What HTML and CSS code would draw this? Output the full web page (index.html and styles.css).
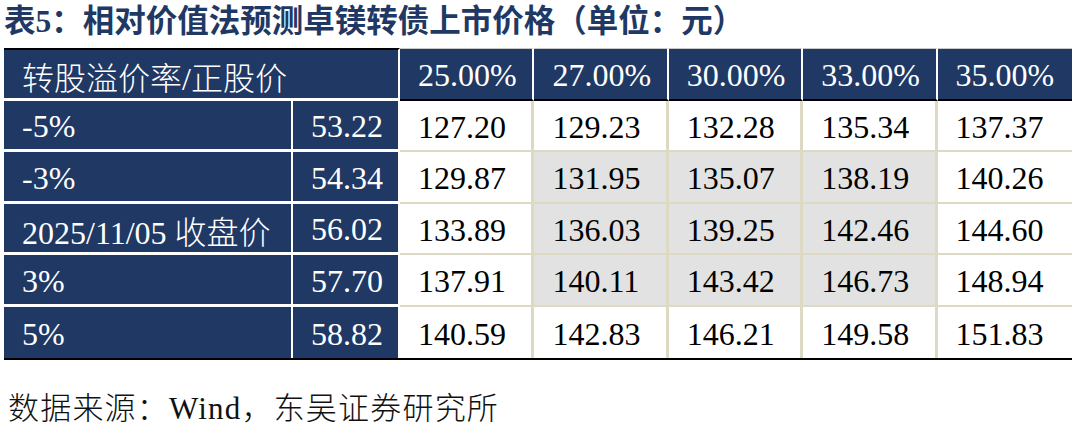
FILE: index.html
```html
<!DOCTYPE html>
<html lang="zh-CN">
<head>
<meta charset="utf-8">
<title>相对价值法预测卓镁转债上市价格</title>
<link rel="stylesheet" href="styles.css">
</head>
<body>
<div class="page">
  <h1 class="title">表<span class="lat">5</span>：相对价值法预测卓镁转债上市价格（单位：元）</h1>
  <div class="table">
    <div class="cell hd-label">转股溢价率/正股价</div>
    <div class="cell hd">25.00%</div>
    <div class="cell hd">27.00%</div>
    <div class="cell hd">30.00%</div>
    <div class="cell hd">33.00%</div>
    <div class="cell hd rc">35.00%</div>

    <div class="cell lbl">-5%</div>
    <div class="cell val">53.22</div>
    <div class="cell num">127.20</div>
    <div class="cell num">129.23</div>
    <div class="cell num">132.28</div>
    <div class="cell num">135.34</div>
    <div class="cell num rc">137.37</div>

    <div class="cell lbl">-3%</div>
    <div class="cell val">54.34</div>
    <div class="cell num">129.87</div>
    <div class="cell num g">131.95</div>
    <div class="cell num g">135.07</div>
    <div class="cell num g">138.19</div>
    <div class="cell num rc">140.26</div>

    <div class="cell lbl">2025/11/05 收盘价</div>
    <div class="cell val">56.02</div>
    <div class="cell num">133.89</div>
    <div class="cell num g">136.03</div>
    <div class="cell num g">139.25</div>
    <div class="cell num g">142.46</div>
    <div class="cell num rc">144.60</div>

    <div class="cell lbl">3%</div>
    <div class="cell val">57.70</div>
    <div class="cell num">137.91</div>
    <div class="cell num g">140.11</div>
    <div class="cell num g">143.42</div>
    <div class="cell num g">146.73</div>
    <div class="cell num rc">148.94</div>

    <div class="cell lbl end">5%</div>
    <div class="cell val end">58.82</div>
    <div class="cell num end">140.59</div>
    <div class="cell num end">142.83</div>
    <div class="cell num end">146.21</div>
    <div class="cell num end">149.58</div>
    <div class="cell num end rc">151.83</div>
  </div>
  <p class="source">数据来源：Wind，东吴证券研究所</p>
</div>
</body>
</html>
```

FILE: styles.css
```css
body {
  margin: 0;
  background: #ffffff;
}

.page {
  width: 1068px;
  padding: 0 4px;
}

.title {
  margin: 0;
  height: 48px;
  font-family: "Noto Sans CJK SC", sans-serif;
  font-weight: 700;
  font-size: 31.5px;
  line-height: 37px;
  color: #1f3864;
  white-space: nowrap;
}

.title .lat {
  font-family: "Liberation Serif", serif;
}

.table {
  display: grid;
  grid-template-columns: 289px 107px repeat(5, 134.4px);
  grid-template-rows: 53px 51px 52px 51px 52px 51px;
  border-bottom: 2px solid #000000;
  font-family: "Liberation Serif", "Noto Sans CJK SC", serif;
  font-size: 32px;
  font-weight: 300;
}

.cell {
  box-sizing: border-box;
  display: flex;
  align-items: center;
  padding: 3px 0 0 18px;
  white-space: nowrap;
}

.hd-label {
  grid-column: span 2;
  background: #1f3864;
  color: #ffffff;
  border-top: 2px solid #000000;
  border-right: 2px solid #ffffff;
  border-bottom: 3px solid #ffffff;
}

.hd {
  background: #1f3864;
  color: #ffffff;
  border-top: 1px solid #c9c9c9;
  border-right: 2px solid #ffffff;
  border-bottom: 2px solid #000000;
}

.lbl,
.val {
  background: #1f3864;
  color: #ffffff;
  border-right: 2px solid #ffffff;
  border-bottom: 3px solid #ffffff;
}

.num {
  background: #ffffff;
  color: #000000;
  border-right: 3px solid #ddd9c3;
  border-bottom: 2px solid #ddd9c3;
}

.num.g {
  background: #e2e2e2;
}

.cell.end {
  border-bottom: 0;
}

.cell.rc {
  border-right: 0;
}

.source {
  margin: 29px 0 0;
  padding-left: 4px;
  font-family: "Liberation Serif", "Noto Sans CJK SC", serif;
  font-size: 31px;
  font-weight: 300;
  letter-spacing: 1.2px;
  line-height: 40px;
  color: #111111;
  white-space: nowrap;
}
```
